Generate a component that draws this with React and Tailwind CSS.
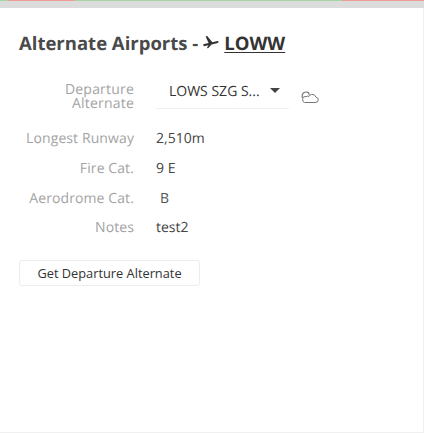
const rows = [
  { label: "Longest Runway", value: "2,510m" },
  { label: "Fire Cat.", value: "9 E" },
  { label: "Aerodrome Cat.", value: "B", indent: true },
  { label: "Notes", value: "test2" },
];

const PlaneIcon = () => (
  <svg width="18" height="14" viewBox="0 0 18 14" className="ml-[4px] mr-[4px] mb-[5px] inline-block text-[#333]">
    <path
      d="M1 9.4 L1.9 11.2 L6.4 10.3 L4.8 13.2 L6.4 13 L9.6 9.6 L15 8.2 Q17 7.6 16.6 6.6 Q16.2 5.8 14.4 6.3 L10.4 7.3 L5.2 1 L3.6 1.4 L6.6 8 L3.2 8.8 Z"
      fill="currentColor"
    />
  </svg>
);

const CloudIcon = () => (
  <svg width="18" height="14" viewBox="0 0 18 14" fill="none" stroke="#777" strokeWidth="1" className="mt-[11px] ml-[12px]">
    <path d="M3.5 12.5 H14 Q17.3 12.5 17.3 9.8 Q17.3 7.6 15 7.2 Q13.8 3.8 10.4 4.4 Q8.8 4.8 8 6.4 Q6.6 5.8 5 6.6 Q2 6 1.6 8.8 Q1.6 12.5 3.5 12.5 Z" />
    <path d="M1.4 7.8 Q0.6 4.6 2.4 3 Q4.4 1.4 6.8 2.4 Q8 3 8.2 4.8" strokeWidth="1.2" />
  </svg>
);

export default function App() {
  return (
    <div className="h-[433px] w-[424px] bg-white font-['Open_Sans',sans-serif] [text-rendering:geometricPrecision] overflow-hidden flex flex-col">
      <div className="h-2 shrink-0 bg-[#dcdcdc]">
        <div className="flex h-px">
          <div className="w-2 bg-[#a5d6a0]" />
          <div className="w-[67px] bg-[#f09a9a]" />
          <div className="w-[267px] bg-[#a5d6a0]" />
          <div className="flex-1 bg-[#f09a9a]" />
        </div>
      </div>

      <div className="flex-1 border-r border-b border-[#f0f0f0] pl-[19px]">
        <h1 className="mt-[22px] flex items-center text-[18.5px] leading-[28px] font-bold text-[#4a4a4a]">
          Alternate Airports -
          <PlaneIcon />
          <span className="text-[#333] underline underline-offset-2">LOWW</span>
        </h1>

        <div className="mt-[21px] flex">
          <div className="w-[115px] pt-[4px] text-right text-[14px] leading-[14px] tracking-[0.2px] text-[#a3a3a3]">
            Departure
            <br />
            Alternate
          </div>
          <div className="ml-[22px] flex h-[30px] w-[133px] items-start border-b border-[#f0f0f0] pt-[3px] pl-[13px]">
            <span className="text-[14px] leading-[20px] text-[#333]">LOWS SZG S...</span>
            <span className="mt-[6px] ml-[10px] h-0 w-0 border-x-[5.5px] border-t-[5px] border-x-transparent border-t-[#444]" />
          </div>
          <CloudIcon />
        </div>

        <div className="mt-[13px] flex flex-col">
          {rows.map((row) => (
            <div key={row.label} className="flex h-[29.7px] items-center text-[14px]">
              <div className="w-[115px] text-right text-[#a3a3a3] tracking-[0.1px] whitespace-nowrap">{row.label}</div>
              <div className={row.indent ? "ml-[26px] text-[#555]" : "ml-[22px] text-[#444]"}>{row.value}</div>
            </div>
          ))}
        </div>

        <button className="mt-[17.5px] flex h-[26px] w-[181px] items-center justify-center rounded-[3px] border border-[#ececec] bg-white text-[12.8px] text-[#333]">
          Get Departure Alternate
        </button>
      </div>
    </div>
  );
}
